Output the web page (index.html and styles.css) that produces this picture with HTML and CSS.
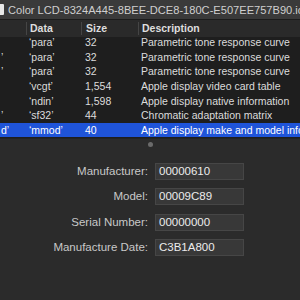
FILE: index.html
```html
<!DOCTYPE html>
<html>
<head>
<meta charset="utf-8">
<link rel="stylesheet" href="styles.css">
</head>
<body>
<div class="window">
  <div class="titlebar">
    <span class="docicon"></span>
    <span class="title">Color LCD-8324A445-8BEE-DCE8-180C-E507EE757B90.icc</span>
  </div>
  <div class="table">
    <div class="thead">
      <div class="th c0"></div>
      <div class="th c1">Data</div>
      <div class="th c2">Size</div>
      <div class="th c3">Description</div>
    </div>
    <div class="tbody">
      <div class="rows">
        <div class="row"><div class="c0"></div><div class="c1">‘para’</div><div class="c2">32</div><div class="c3">Parametric tone response curve</div></div>
        <div class="row"><div class="c0">’</div><div class="c1">‘para’</div><div class="c2">32</div><div class="c3">Parametric tone response curve</div></div>
        <div class="row"><div class="c0">’</div><div class="c1">‘para’</div><div class="c2">32</div><div class="c3">Parametric tone response curve</div></div>
        <div class="row"><div class="c0"></div><div class="c1">‘vcgt’</div><div class="c2">1,554</div><div class="c3">Apple display video card table</div></div>
        <div class="row"><div class="c0"></div><div class="c1">‘ndin’</div><div class="c2">1,598</div><div class="c3">Apple display native information</div></div>
        <div class="row"><div class="c0">’</div><div class="c1">‘sf32’</div><div class="c2">44</div><div class="c3">Chromatic adaptation matrix</div></div>
        <div class="row selected"><div class="c0">d’</div><div class="c1">‘mmod’</div><div class="c2">40</div><div class="c3">Apple display make and model information</div></div>
      </div>
    </div>
  </div>
  <div class="pane">
    <div class="splitter"><span class="dot"></span></div>
    <div class="form">
      <div class="label">Manufacturer:</div><div class="field">00000610</div>
      <div class="label">Model:</div><div class="field">00009C89</div>
      <div class="label">Serial Number:</div><div class="field">00000000</div>
      <div class="label">Manufacture Date:</div><div class="field">C3B1A800</div>
    </div>
  </div>
</div>
</body>
</html>
```
FILE: styles.css
```css
html, body {
  margin: 0;
  padding: 0;
  width: 300px;
  height: 300px;
  overflow: hidden;
  background: #2b2b2b;
  font-family: "Liberation Sans", Arial, sans-serif;
}
.window {
  width: 300px;
  height: 300px;
  display: flex;
  flex-direction: column;
}
.titlebar {
  height: 20px;
  flex: none;
  background: #3a3a3a;
  border-bottom: 1px solid #1c1c1c;
  box-sizing: border-box;
  display: flex;
  align-items: center;
  overflow: hidden;
  white-space: nowrap;
}
.docicon {
  flex: none;
  width: 4px;
  height: 11px;
  background: #e8e8e8;
  border-radius: 0 1px 1px 0;
  margin-right: 4px;
}
.title {
  font-size: 11.1px;
  color: #cfcfcf;
}
.table {
  flex: none;
  height: 118px;
  background: #1e1e1e;
  display: flex;
  flex-direction: column;
}
.thead {
  height: 17px;
  flex: none;
  background: #2a2a2a;
  display: grid;
  grid-template-columns: 26px 55px 57px 1fr;
  align-items: center;
  font-size: 10.5px;
  font-weight: bold;
  color: #dedede;
}
.th {
  height: 13px;
  line-height: 13px;
  border-left: 1px solid #454545;
}
.th.c0 { border-left: none; }
.tbody {
  flex: 1;
  overflow: hidden;
}
.rows {
  margin-top: -2.3px;
}
.row {
  height: 14.67px;
  display: grid;
  grid-template-columns: 26px 55px 57px 1fr;
  align-items: center;
  font-size: 10.5px;
  color: #dcdcdc;
  white-space: nowrap;
}
.row > div { overflow: hidden; }
.row.selected {
  background: #1f54d9;
  color: #ffffff;
}
.c0 { padding-left: 0; }
.row .c0 { padding-left: 1px; }
.c1 { padding-left: 3px; }
.c2 { padding-left: 4px; }
.c3 { padding-left: 3px; }
.pane {
  flex: 1;
  background: #2b2b2b;
  border-top: 1px solid #232323;
}
.splitter {
  height: 10px;
  display: flex;
  justify-content: center;
  align-items: center;
}
.dot {
  width: 5px;
  height: 5px;
  border-radius: 50%;
  background: #6b6b6b;
}
.form {
  margin-top: 14px;
  display: grid;
  grid-template-columns: 148px 89px;
  grid-auto-rows: 17px;
  column-gap: 7px;
  row-gap: 8.3px;
  font-size: 11.5px;
}
.label {
  text-align: right;
  color: #c8c8c8;
  line-height: 17px;
}
.field {
  background: #383838;
  border: 1px solid #464646;
  box-sizing: border-box;
  color: #ececec;
  line-height: 15px;
  padding-left: 3px;
}
```
